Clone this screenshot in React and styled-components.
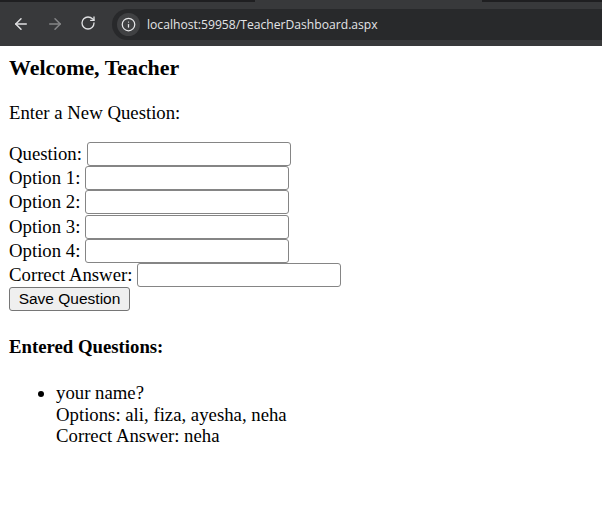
import React from 'react';
import styled, { createGlobalStyle } from 'styled-components';
import { ArrowLeft, ArrowRight, RotateCw, Info } from 'lucide-react';

const GlobalStyle = createGlobalStyle`
  html, body {
    margin: 0;
    padding: 0;
    background: #fff;
  }
`;

const Page = styled.div`
  width: 602px;
  height: 521px;
  overflow: hidden;
  font-family: "Liberation Serif", "Times New Roman", serif;
  font-size: 18.75px;
  color: #000;
`;

const TabStrip = styled.div`
  height: 2px;
  background: #1f1f21;
  padding-left: 255px;
`;

const ActiveTab = styled.div`
  width: 227px;
  height: 2px;
  background: #38393b;
`;

const Toolbar = styled.div`
  height: 44px;
  background: #38393b;
  display: flex;
  align-items: center;
  padding-left: 12px;
`;

const NavButton = styled.span`
  width: 18px;
  height: 18px;
  margin-right: 16px;
  display: flex;
  color: ${({ disabled }) => (disabled ? '#858688' : '#dfe0e2')};
`;

const Omnibox = styled.div`
  margin-left: -2px;
  flex: 1;
  height: 31px;
  border-radius: 16px 0 0 16px;
  background: #28292b;
  display: flex;
  align-items: center;
  padding-left: 5px;
`;

const InfoBadge = styled.span`
  width: 23px;
  height: 23px;
  border-radius: 50%;
  background: #404143;
  color: #e6e7e9;
  display: flex;
  align-items: center;
  justify-content: center;
  margin-right: 7px;
`;

const Url = styled.span`
  font-family: "Open Sans", "Liberation Sans", sans-serif;
  font-size: 12.15px;
  color: #e3e4e6;
`;

const Content = styled.main`
  padding: 8px 9px 0;
`;

const Title = styled.h3`
  margin: 0;
  font-size: 21.9px;
  line-height: 27px;
  font-weight: bold;
`;

const Prompt = styled.p`
  margin: 20px 0 18px;
  line-height: 23px;
`;

const Row = styled.div`
  height: 24.2px;
  display: flex;
  align-items: center;
  gap: 5px;
`;

const Field = styled.input`
  width: 204px;
  height: 24px;
  box-sizing: border-box;
  padding: 1px 2px;
  background: #fff;
  border: 1px solid #858585;
  border-radius: 3px;
`;

const SaveButton = styled.button`
  display: block;
  width: 121px;
  height: 24px;
  padding: 0 0 1px;
  font-family: "Liberation Sans", Arial, sans-serif;
  font-size: 15.5px;
  color: #000;
  background: #efefef;
  border: 1px solid #767676;
  border-radius: 3px;
`;

const Subtitle = styled.h4`
  margin: 24px 0 0;
  font-size: 18.75px;
  line-height: 23px;
  font-weight: bold;
`;

const Questions = styled.ul`
  margin: 24px 0 0;
  padding-left: 47px;
  line-height: 21.5px;
`;

const fields = [
  { label: 'Question:' },
  { label: 'Option 1:' },
  { label: 'Option 2:' },
  { label: 'Option 3:' },
  { label: 'Option 4:' },
  { label: 'Correct Answer:' },
];

export default function App() {
  return (
    <Page>
      <GlobalStyle />
      <TabStrip>
        <ActiveTab />
      </TabStrip>
      <Toolbar>
        <NavButton><ArrowLeft size={18} strokeWidth={2} /></NavButton>
        <NavButton disabled><ArrowRight size={18} strokeWidth={2} /></NavButton>
        <NavButton><RotateCw size={16} strokeWidth={2} /></NavButton>
        <Omnibox>
          <InfoBadge><Info size={15} strokeWidth={2} /></InfoBadge>
          <Url>localhost:59958/TeacherDashboard.aspx</Url>
        </Omnibox>
      </Toolbar>
      <Content>
        <Title>Welcome, Teacher</Title>
        <Prompt>Enter a New Question:</Prompt>
        {fields.map(({ label }) => (
          <Row key={label}>
            <span>{label}</span>
            <Field type="text" />
          </Row>
        ))}
        <SaveButton type="button">Save Question</SaveButton>
        <Subtitle>Entered Questions:</Subtitle>
        <Questions>
          <li>
            your name?<br />
            Options: ali, fiza, ayesha, neha<br />
            Correct Answer: neha
          </li>
        </Questions>
      </Content>
    </Page>
  );
}
